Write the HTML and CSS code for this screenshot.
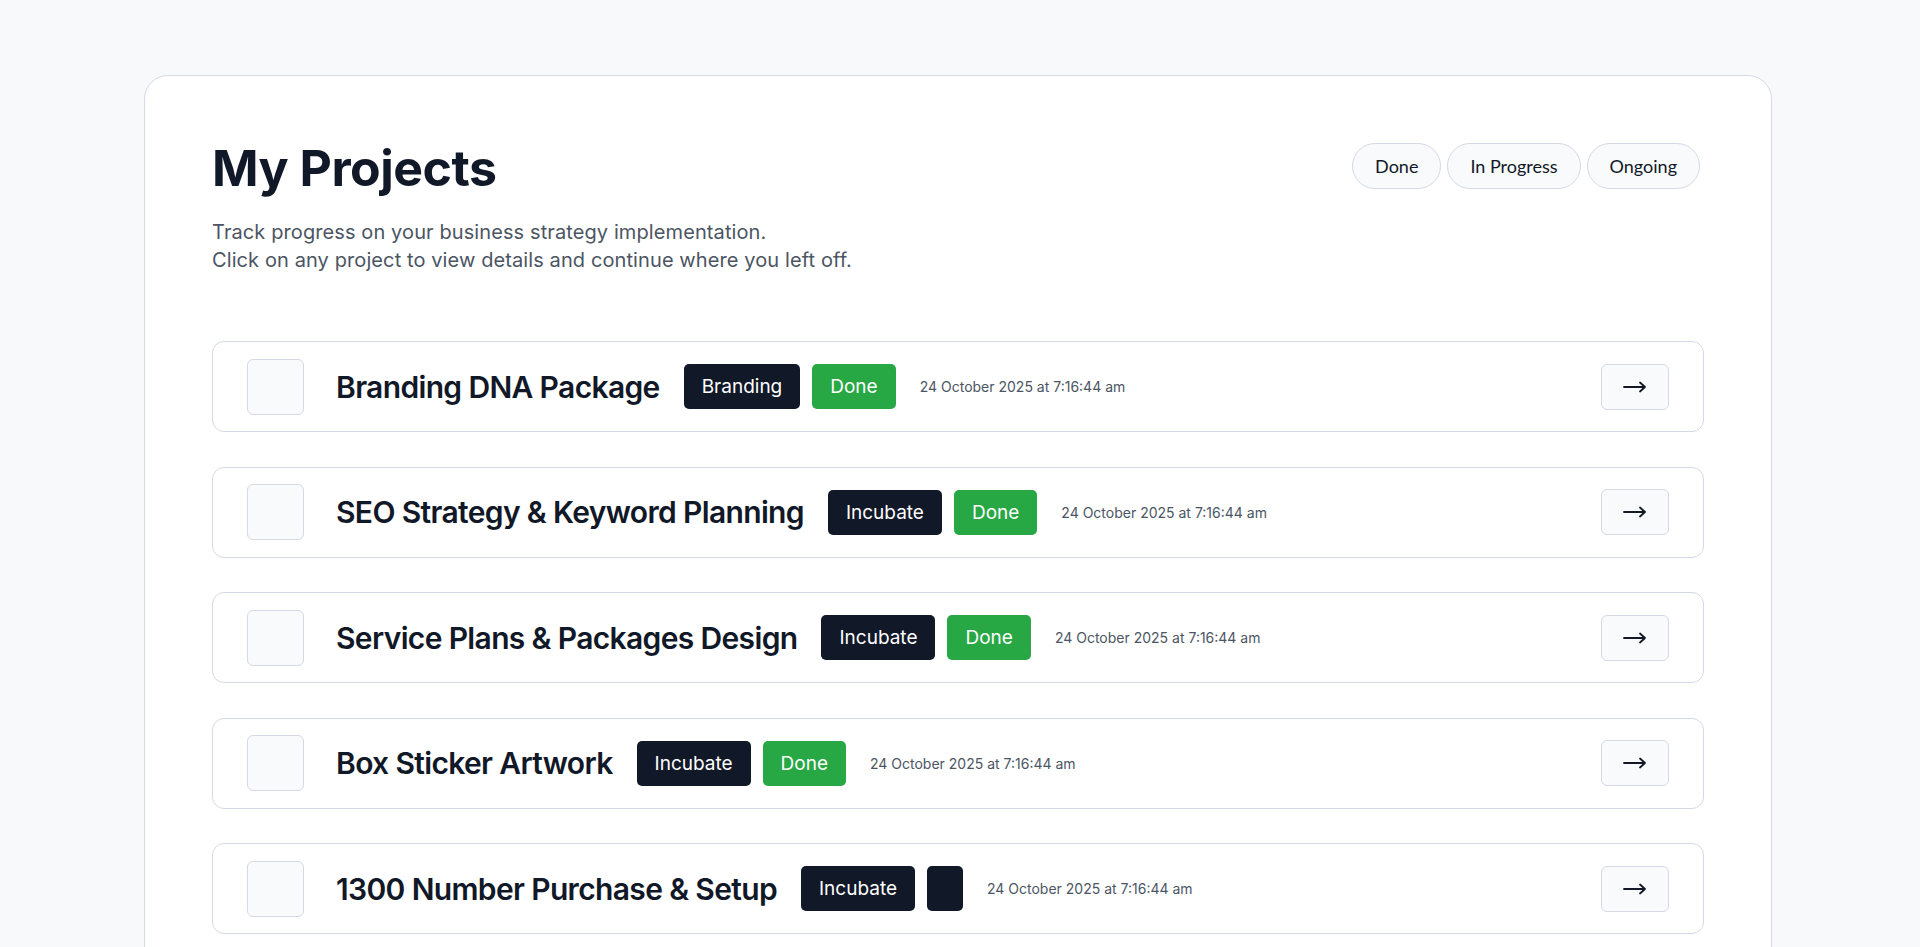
FILE: index.html
```html
<!DOCTYPE html>
<html lang="en">
<head>
<meta charset="utf-8">
<title>My Projects</title>
<link rel="stylesheet" href="styles.css">
</head>
<body>
<div class="page">
  <section class="card">
    <header class="header">
      <div class="intro">
        <h1 class="title">My Projects</h1>
        <p class="subtitle">Track progress on your business strategy implementation.<br>Click on any project to view details and continue where you left off.</p>
      </div>
      <div class="filters">
        <button class="pill">Done</button>
        <button class="pill">In Progress</button>
        <button class="pill">Ongoing</button>
      </div>
    </header>

    <ul class="list">
      <li class="row">
        <div class="thumb"></div>
        <h2 class="name">Branding DNA Package</h2>
        <div class="badges"><span class="badge dark">Branding</span><span class="badge green">Done</span></div>
        <span class="date">24 October 2025 at 7:16:44 am</span>
        <button class="go"><svg width="24" height="14" viewBox="0 0 24 14"><path d="M1 7h21M17 2.5l5 4.5-5 4.5" fill="none" stroke="#111827" stroke-width="1.8" stroke-linecap="round" stroke-linejoin="round"/></svg></button>
      </li>
      <li class="row">
        <div class="thumb"></div>
        <h2 class="name">SEO Strategy &amp; Keyword Planning</h2>
        <div class="badges"><span class="badge dark">Incubate</span><span class="badge green">Done</span></div>
        <span class="date">24 October 2025 at 7:16:44 am</span>
        <button class="go"><svg width="24" height="14" viewBox="0 0 24 14"><path d="M1 7h21M17 2.5l5 4.5-5 4.5" fill="none" stroke="#111827" stroke-width="1.8" stroke-linecap="round" stroke-linejoin="round"/></svg></button>
      </li>
      <li class="row">
        <div class="thumb"></div>
        <h2 class="name">Service Plans &amp; Packages Design</h2>
        <div class="badges"><span class="badge dark">Incubate</span><span class="badge green">Done</span></div>
        <span class="date">24 October 2025 at 7:16:44 am</span>
        <button class="go"><svg width="24" height="14" viewBox="0 0 24 14"><path d="M1 7h21M17 2.5l5 4.5-5 4.5" fill="none" stroke="#111827" stroke-width="1.8" stroke-linecap="round" stroke-linejoin="round"/></svg></button>
      </li>
      <li class="row">
        <div class="thumb"></div>
        <h2 class="name">Box Sticker Artwork</h2>
        <div class="badges"><span class="badge dark">Incubate</span><span class="badge green">Done</span></div>
        <span class="date">24 October 2025 at 7:16:44 am</span>
        <button class="go"><svg width="24" height="14" viewBox="0 0 24 14"><path d="M1 7h21M17 2.5l5 4.5-5 4.5" fill="none" stroke="#111827" stroke-width="1.8" stroke-linecap="round" stroke-linejoin="round"/></svg></button>
      </li>
      <li class="row">
        <div class="thumb"></div>
        <h2 class="name">1300 Number Purchase &amp; Setup</h2>
        <div class="badges"><span class="badge dark">Incubate</span><span class="badge dark"></span></div>
        <span class="date">24 October 2025 at 7:16:44 am</span>
        <button class="go"><svg width="24" height="14" viewBox="0 0 24 14"><path d="M1 7h21M17 2.5l5 4.5-5 4.5" fill="none" stroke="#111827" stroke-width="1.8" stroke-linecap="round" stroke-linejoin="round"/></svg></button>
      </li>
    </ul>
  </section>
</div>
</body>
</html>
```

FILE: styles.css
```css
* { box-sizing: border-box; }

html, body {
  margin: 0;
  padding: 0;
}

body {
  background: #f8f9fb;
  font-family: Inter, "Liberation Sans", sans-serif;
  color: #111827;
}

.page {
  padding: 75px 0 0 144px;
}

.card {
  width: 1628px;
  background: #ffffff;
  border: 1px solid #d5d9e6;
  border-radius: 24px;
  padding: 67px 67px 80px 67px;
}

.header {
  display: flex;
  justify-content: space-between;
  align-items: flex-start;
}

.title {
  margin: 0;
  font-size: 50px;
  line-height: 1;
  font-weight: 700;
  letter-spacing: -0.5px;
  color: #111827;
}

.subtitle {
  margin: 25px 0 0 0;
  font-size: 20px;
  line-height: 28px;
  letter-spacing: 0.1px;
  color: #4b5563;
}

.filters {
  display: flex;
  gap: 6px;
  margin-right: 4px;
}

.pill {
  height: 46px;
  padding: 0 22px;
  border: 1px solid #d5d9e6;
  border-radius: 23px;
  background: #f8fafc;
  font-family: Lato, "Noto Sans", sans-serif;
  font-size: 18px;
  color: #111827;
  cursor: pointer;
}

.list {
  list-style: none;
  margin: 67px 0 0 0;
  padding: 0;
  display: flex;
  flex-direction: column;
  gap: 34.5px;
}

.row {
  display: flex;
  align-items: center;
  height: 91px;
  padding: 0 34px 0 34px;
  border: 1px solid #d5d9e6;
  border-radius: 12px;
  background: #ffffff;
}

.thumb {
  width: 57px;
  height: 56px;
  flex: none;
  border: 1px solid #d5d9e6;
  border-radius: 6px;
  background: #f8fafc;
  margin-right: 32px;
}

.name {
  margin: 0 24px 0 0;
  font-size: 30px;
  font-weight: 600;
  letter-spacing: -0.65px;
  line-height: 36px;
  color: #111827;
}

.badges {
  display: flex;
  gap: 12px;
  margin-right: 24px;
}

.badge {
  display: inline-flex;
  align-items: center;
  height: 45px;
  min-width: 36px;
  padding: 0 18px;
  border-radius: 5px;
  font-size: 19px;
  color: #ffffff;
}

.badge.dark { background: #111827; }
.badge.green { background: #28a745; }

.date {
  font-size: 14px;
  color: #4b5563;
}

.go {
  margin-left: auto;
  width: 68px;
  height: 46px;
  border: 1px solid #d5d9e6;
  border-radius: 6px;
  background: #f8fafc;
  display: flex;
  align-items: center;
  justify-content: center;
  padding: 0;
  cursor: pointer;
}
```
